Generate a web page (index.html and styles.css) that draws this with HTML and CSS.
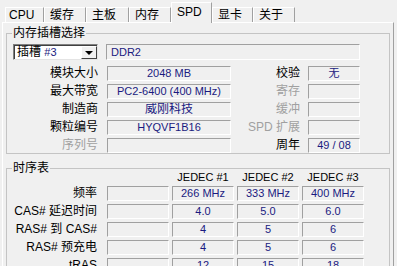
FILE: index.html
```html
<!DOCTYPE html>
<html lang="zh-CN">
<head>
    <meta charset="UTF-8">
    <title>CPU-Z SPD</title>
    <link rel="stylesheet" href="styles.css">
</head>
<body>
<div class="window">

    <!-- Tab strip -->
    <div class="tabs">
        <div class="tab t-cpu">CPU</div>
        <div class="tab t-42">缓存</div>
        <div class="tab t-43">主板</div>
        <div class="tab t-42">内存</div>
        <div class="tab active">SPD</div>
        <div class="tab t-41">显卡</div>
        <div class="tab t-42">关于</div>
    </div>

    <div class="panel">

        <!-- Memory slot selection -->
        <fieldset class="group slot-group">
            <legend>内存插槽选择</legend>

            <div class="slot-row">
                <div class="combo">
                    <span class="combo-text">插槽 <span class="val">#3</span></span>
                    <span class="combo-btn"><span class="arrow"></span></span>
                </div>
                <div class="field type-field">DDR2</div>
            </div>

            <div class="info">
                <span class="label">模块大小</span>
                <span class="field">2048 MB</span>
                <span class="label">校验</span>
                <span class="field">无</span>

                <span class="label">最大带宽</span>
                <span class="field">PC2-6400 (400 MHz)</span>
                <span class="label off">寄存</span>
                <span class="field"></span>

                <span class="label">制造商</span>
                <span class="field cjk">威刚科技</span>
                <span class="label off">缓冲</span>
                <span class="field"></span>

                <span class="label">颗粒编号</span>
                <span class="field">HYQVF1B16</span>
                <span class="label off">SPD 扩展</span>
                <span class="field"></span>

                <span class="label off">序列号</span>
                <span class="field"></span>
                <span class="label">周年</span>
                <span class="field">49 / 08</span>
            </div>
        </fieldset>

        <!-- Timings table -->
        <fieldset class="group timing-group">
            <legend>时序表</legend>

            <div class="timing">
                <span></span>
                <span></span>
                <span class="head">JEDEC #1</span>
                <span class="head">JEDEC #2</span>
                <span class="head">JEDEC #3</span>

                <span class="label">频率</span>
                <span class="field"></span>
                <span class="field">266 MHz</span>
                <span class="field">333 MHz</span>
                <span class="field">400 MHz</span>

                <span class="label">CAS# 延迟时间</span>
                <span class="field"></span>
                <span class="field">4.0</span>
                <span class="field">5.0</span>
                <span class="field">6.0</span>

                <span class="label">RAS# 到 CAS#</span>
                <span class="field"></span>
                <span class="field">4</span>
                <span class="field">5</span>
                <span class="field">6</span>

                <span class="label">RAS# 预充电</span>
                <span class="field"></span>
                <span class="field">4</span>
                <span class="field">5</span>
                <span class="field">6</span>

                <span class="label">tRAS</span>
                <span class="field"></span>
                <span class="field">12</span>
                <span class="field">15</span>
                <span class="field">18</span>
            </div>
        </fieldset>

    </div>
</div>
</body>
</html>
```

FILE: styles.css
```css
/* General page styles */
body {
    margin: 0;
    background-color: #f0f0f0;
    font-family: "Liberation Sans", "Noto Sans CJK SC", sans-serif;
    font-size: 12px;
    color: #000;
    width: 397px;
    height: 266px;
    overflow: hidden;
}

.window {
    padding-left: 2px;
}

/* Tabs */
.tabs {
    display: flex;
    align-items: flex-end;
    height: 22px;
    padding-left: 3px;
}

.tab {
    box-sizing: border-box;
    height: 15px;
    line-height: 14px;
    padding-left: 5px;
    border-top: 1px solid #fff;
    border-left: 1px solid #fff;
    border-right: 1px solid #a0a0a0;
    white-space: nowrap;
}

.t-cpu { width: 39px; padding-left: 3px; }
.t-41 { width: 41px; }
.t-42 { width: 42px; }
.t-43 { width: 43px; }

.tab.active {
    position: relative;
    z-index: 1;
    width: 41px;
    height: 21px;
    line-height: 18px;
    margin-bottom: -1px;
    padding-left: 5px;
    background-color: #f0f0f0;
}

/* Tab page */
.panel {
    box-sizing: border-box;
    width: 392px;
    height: 260px;
    border: 1px solid;
    border-color: #fff #a0a0a0 #a0a0a0 #fff;
}

/* Group boxes */
.group {
    margin: 4px 3px 0 3px;
    padding: 0;
    min-width: 0;
    border: 1px solid #c4c4c4;
}

.group legend {
    margin-left: 5px;
    padding: 0 1px;
    font-size: 12px;
    line-height: 12px;
}

.slot-group {
    padding-top: 5px;
    padding-bottom: 0;
}

.timing-group {
    margin-top: 8px;
    height: 110px;
}

/* Sunken read-only fields */
.field {
    box-sizing: border-box;
    height: 15px;
    border: 1px solid;
    border-color: #a0a0a0 #fff #fff #a0a0a0;
    color: #1a1a80;
    font-size: 11px;
    line-height: 13px;
    text-align: center;
    white-space: nowrap;
    overflow: hidden;
}

.field.cjk {
    font-size: 12px;
}

.label {
    text-align: right;
    line-height: 15px;
    white-space: nowrap;
}

.label.off {
    color: #a0a0a0;
}

/* Slot selector row */
.slot-row {
    display: flex;
    height: 16px;
    margin-bottom: 6px;
}

.combo {
    box-sizing: border-box;
    display: flex;
    width: 85px;
    margin-left: 6px;
    background-color: #fff;
    border: 1px solid;
    border-color: #808080 #e4e4e4 #e4e4e4 #808080;
    box-shadow: inset 1px 1px 0 #404040;
}

.combo-text {
    flex: 1;
    padding-left: 3px;
    line-height: 14px;
    white-space: nowrap;
}

.val {
    color: #1a1a80;
    font-size: 11px;
}

.combo-btn {
    box-sizing: border-box;
    display: flex;
    align-items: center;
    justify-content: center;
    width: 16px;
    margin: 1px 0 0 0;
    background-color: #f0f0f0;
    border: 1px solid;
    border-color: #fff #404040 #404040 #fff;
}

.arrow {
    width: 0;
    height: 0;
    border-left: 4px solid transparent;
    border-right: 4px solid transparent;
    border-top: 4px solid #000;
}

.type-field {
    width: 254px;
    height: 16px;
    line-height: 14px;
    margin-left: 8px;
    padding-left: 4px;
    text-align: left;
}

/* Module info grid */
.info {
    display: grid;
    grid-template-columns: 100px 124px 77px 52px;
    grid-auto-rows: 15px;
    row-gap: 3px;
}

.info .label:nth-child(4n+1) {
    padding-right: 9px;
}

.info .label:nth-child(4n+3) {
    padding-right: 8px;
}

/* Timings grid */
.timing {
    display: grid;
    grid-template-columns: 97px 62px 62px 62px 62px;
    grid-template-rows: 12px;
    grid-auto-rows: 15px;
    column-gap: 3px;
    row-gap: 3px;
    margin-top: -3px;
}

.timing .label {
    padding-right: 7px;
}

.head {
    text-align: center;
    font-size: 11px;
    line-height: 12px;
    white-space: nowrap;
}
```
